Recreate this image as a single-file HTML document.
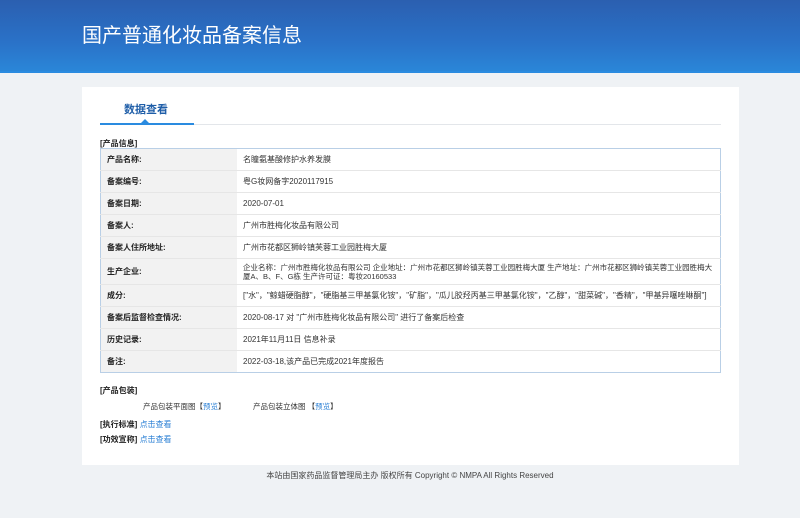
<!DOCTYPE html><html><head><meta charset="utf-8"><style>
body{margin:0;width:800px;height:518px;background:#eff2f5;font-family:"Liberation Sans","Noto Sans CJK SC",sans-serif;position:relative;overflow:hidden}
.hd{position:absolute;left:0;top:0;width:800px;height:71px;background:linear-gradient(180deg,#2b5fb0 0%,#2a72c8 60%,#2a86d8 100%);border-bottom:2px solid #2a8be0}
.hd .t{position:absolute;left:82px;top:19px;color:#fff;font-size:20px}
.card{position:absolute;left:82px;top:87px;width:657px;height:378px;background:#fff}
.tab{position:absolute;left:42px;top:14px;font-size:11px;font-weight:bold;color:#1f5ea8}
.ln{position:absolute;left:18px;top:37px;width:621px;height:1px;background:#e3e6ea}
.bl{position:absolute;left:18px;top:36px;width:94px;height:2px;background:#2a8be0}
.tri{position:absolute;left:59px;top:32px;width:0;height:0;border-left:4px solid transparent;border-right:4px solid transparent;border-bottom:4px solid #2a8be0}
.sec{position:absolute;font-size:8px;font-weight:bold;color:#222}
table{position:absolute;left:18px;top:61px;width:621px;border-collapse:collapse;border:1px solid #b9cfe6;font-size:8px;color:#333}
td{border-bottom:1px solid #e6e6e6;padding:0 6px;height:21px}
td.l{width:124px;background:#f2f2f2;font-weight:bold;color:#222}
a{color:#2a7fd4;text-decoration:none}
.sm{position:absolute;font-size:7.5px;color:#333}
.ft{position:absolute;left:0;width:800px;top:469px;text-align:center;font-size:8px;color:#444;padding-left:20px;box-sizing:border-box}
</style></head><body>
<div class="hd"><div class="t">国产普通化妆品备案信息</div></div>
<div class="card">
<div class="tab">数据查看</div><div class="ln"></div><div class="bl"></div><div class="tri"></div>
<div class="sec" style="left:18px;top:51px">[产品信息]</div>
<table>
<tr><td class="l">产品名称:</td><td>名瞳氨基酸修护水养发膜</td></tr>
<tr><td class="l">备案编号:</td><td>粤G妆网备字2020117915</td></tr>
<tr><td class="l">备案日期:</td><td>2020-07-01</td></tr>
<tr><td class="l">备案人:</td><td>广州市胜梅化妆品有限公司</td></tr>
<tr><td class="l">备案人住所地址:</td><td>广州市花都区狮岭镇芙蓉工业园胜梅大厦</td></tr>
<tr><td class="l" style="height:25px">生产企业:</td><td style="line-height:9px;font-size:7.5px">企业名称：广州市胜梅化妆品有限公司 企业地址：广州市花都区狮岭镇芙蓉工业园胜梅大厦 生产地址：广州市花都区狮岭镇芙蓉工业园胜梅大厦A、B、F、G栋 生产许可证：粤妆20160533</td></tr>
<tr><td class="l">成分:</td><td>["水"，"鲸蜡硬脂醇"，"硬脂基三甲基氯化铵"，"矿脂"，"瓜儿胶羟丙基三甲基氯化铵"，"乙醇"，"甜菜碱"，"香精"，"甲基异噻唑啉酮"]</td></tr>
<tr><td class="l">备案后监督检查情况:</td><td>2020-08-17 对 "广州市胜梅化妆品有限公司" 进行了备案后检查</td></tr>
<tr><td class="l">历史记录:</td><td>2021年11月11日 信息补录</td></tr>
<tr><td class="l" style="border-bottom:0">备注:</td><td style="border-bottom:0">2022-03-18,该产品已完成2021年度报告</td></tr>
</table>
<div class="sec" style="left:18px;top:298px">[产品包装]</div>
<div class="sm" style="left:61px;top:314px">产品包装平面图【<a>预览</a>】</div>
<div class="sm" style="left:171px;top:314px">产品包装立体图 【<a>预览</a>】</div>
<div class="sec" style="left:18px;top:332px">[执行标准] <a style="font-weight:normal">点击查看</a></div>
<div class="sec" style="left:18px;top:347px">[功效宣称] <a style="font-weight:normal">点击查看</a></div>
</div>
<div class="ft" style="top:470px">本站由国家药品监督管理局主办 版权所有 Copyright © NMPA All Rights Reserved</div>
</body></html>
